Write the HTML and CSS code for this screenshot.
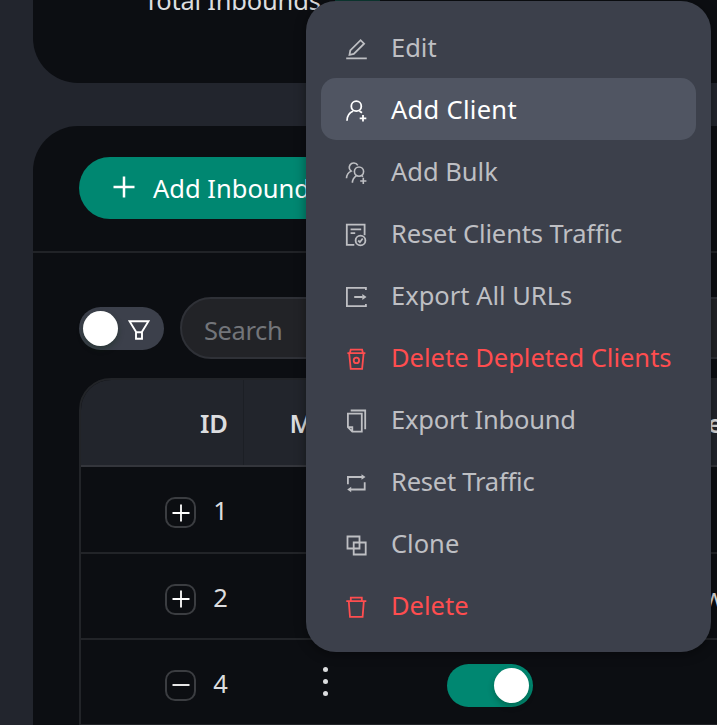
FILE: index.html
```html
<!DOCTYPE html>
<html lang="en">
<head>
<meta charset="utf-8">
<title>Inbounds</title>
<link rel="stylesheet" href="styles.css">
</head>
<body>
<main class="page">
  <section class="card summary">
    <span class="summary-label">Total Inbounds</span>
    <span class="tag"></span>
  </section>

  <section class="card inbounds">
    <header class="card-head">
      <button class="btn-add">
        <svg width="22" height="22" viewBox="0 0 22 22"><path d="M11 0.5v21M0.5 11h21" stroke-width="2.5"/></svg>
        <span>Add Inbound</span>
      </button>
    </header>
    <div class="filters">
      <div class="switch filter-switch">
        <span class="knob"></span>
        <svg width="22" height="22" viewBox="0 0 22 22"><path d="M1.500 2.200h19L14 12.800v7H8v-7zM8 13.200h6" stroke-width="1.900"/></svg>
      </div>
      <div class="search">Search</div>
    </div>
    <div class="table">
      <div class="row head">
        <div class="cell id">ID</div>
        <div class="cell center">Menu</div>
        <div class="cell"></div>
        <div class="cell remark">Remark</div>
      </div>
      <div class="row">
        <div class="cell id"><span class="expand"><svg width="18" height="18" viewBox="0 0 18 18"><path d="M.5 9h17M9 .5v17"/></svg></span><span class="num">1</span></div>
      </div>
      <div class="row">
        <div class="cell id"><span class="expand"><svg width="18" height="18" viewBox="0 0 18 18"><path d="M.5 9h17M9 .5v17"/></svg></span><span class="num">2</span></div>
        <div class="cell"></div>
        <div class="cell"></div>
        <div class="cell protocol">vw</div>
      </div>
      <div class="row">
        <div class="cell id"><span class="expand"><svg width="18" height="18" viewBox="0 0 18 18"><path d="M.5 9h17"/></svg></span><span class="num">4</span></div>
        <div class="cell center"><span class="dots"><i></i><i></i><i></i></span></div>
        <div class="cell center"><div class="switch on"><span class="knob"></span></div></div>
      </div>
    </div>
  </section>

  <ul class="menu">
    <li class="item">
      <svg viewBox="0 0 24 24"><path d="M1.200 21.400h20.600M4.500 17.800l.8-4.400L15.600 3.200l3.500 3.500L8.800 17z"/></svg><span>Edit</span></li>
    <li class="item active wide">
      <svg viewBox="0 0 24 24"><circle cx="11.300" cy="7.200" r="5"/><path d="M2 21.800c0-5 2.400-8.200 6.200-9.800M14.400 12l2.600 1.800M18 16v6.600M14.700 19.300h6.600"/></svg><span>Add Client</span></li>
    <li class="item">
      <svg viewBox="0 0 24 24" class="thin"><circle cx="14" cy="10.600" r="4.600"/><path d="M7.400 21.800c0-3.400 1.200-5.200 4-7.200M16.700 14.600l1.400 1M12.800 4.400C11.200 1.400 6.700 1 5 4c-1.300 2.200-.5 4.600 1.200 6.100C3.200 11.500 1.700 13.700 1.500 17.200M18.300 16.800v6.200M15.200 20h6.200"/></svg><span>Add Bulk</span></li>
    <li class="item tight">
      <svg viewBox="0 0 24 24"><path d="M9.300 21.800H1.800V1.700h17.800v10.500M5.600 6.300h10.600M5.600 10.100h4.600"/><circle cx="15.500" cy="17.500" r="4.900"/><path d="M13.200 17.500l1.700 1.700 2.800-3.700"/></svg><span>Reset Clients Traffic</span></li>
    <li class="item">
      <svg viewBox="0 0 24 24"><path d="M20.900 5V2.900H1.900v18.300h19V19M9.200 12h8.500"/><path d="M17.300 9l4.200 3-4.200 3z" class="solid"/></svg><span>Export All URLs</span></li>
    <li class="item danger">
      <svg viewBox="0 0 24 24"><path d="M2.400 6.200h18M4.900 6l.8-3.400h11.400l.8 3.400M4.200 6.500l1.500 15.300h11.400l1.500-15.300"/><circle cx="11.400" cy="13.400" r="2.700"/></svg><span>Delete Depleted Clients</span></li>
    <li class="item tighter">
      <svg viewBox="0 0 24 24"><path d="M5.700 1.500h14.500v18.800M2.900 4.600h13.900v18H7.300l-4.400-4.400zM2.900 18.200h4.400v4.400"/></svg><span>Export Inbound</span></li>
    <li class="item tighter">
      <svg viewBox="0 0 24 24"><path d="M2.900 13.200V6h14.500M19.700 11.200v7.300H5.200"/><path d="M16.500 3.200l4 2.800-4 2.800zM6.200 15.700l-4 2.800 4 2.800z" class="solid"/></svg><span>Reset Traffic</span></li>
    <li class="item">
      <svg viewBox="0 0 24 24"><path d="M2.500 3.500h12v12h-12zM8.700 9.500h12v12h-12z"/></svg><span>Clone</span></li>
    <li class="item danger">
      <svg viewBox="0 0 24 24"><path d="M1.300 6.200h20M5.800 6V2.700h11V6M3.800 6.500l1.200 15.300h12.600l1.200-15.300"/></svg><span>Delete</span></li>
  </ul>
</main>
</body>
</html>
```
FILE: styles.css
```css
* { box-sizing: border-box; }
body {
  margin: 0;
  height: 725px;
  overflow: hidden;
  background: #22252d;
  color: #dcdddf;
  font: 25.5px/36px "Noto Sans", "Open Sans", sans-serif;
}
svg { fill: none; stroke: currentColor; stroke-width: 1.8; flex: none; }
.page { position: relative; width: 717px; height: 725px; overflow: hidden; }
.card { width: 900px; margin-left: 33px; background: #0c0e12; }
.summary {
  display: flex;
  align-items: flex-end;
  height: 83px;
  border-radius: 0 0 45px 45px;
  padding: 0 0 65px 111px;
  gap: 16px;
}
.summary-label { width: 175px; letter-spacing: -.2px; white-space: nowrap; }
.tag { width: 45px; height: 44px; border-radius: 8px; background: #0d3b34; }
.inbounds { margin-top: 43px; height: 640px; border-radius: 45px 45px 0 0; }
.card-head { height: 127px; padding: 31px 46px; border-bottom: 2px solid #212327; }
.btn-add {
  display: flex;
  align-items: center;
  gap: 19px;
  width: 270px;
  height: 62px;
  padding: 0 33px 0 34px;
  border: 0;
  border-radius: 31px;
  background: #008771;
  color: #fff;
  font: inherit;
  letter-spacing: 0;
  white-space: nowrap;
}
.btn-add svg { margin-top: -3px; }
.btn-add span { margin-left: -1px; }
.filters { display: flex; align-items: center; gap: 16px; height: 62px; margin: 44px 46px 0; }
.switch { display: flex; align-items: center; width: 85px; height: 43px; padding: 4px; border-radius: 22px; background: #3c404b; }
.switch .knob { width: 35px; height: 35px; border-radius: 50%; background: #fff; box-shadow: 0 3px 6px rgba(0, 35, 11, .3); }
.filter-switch svg { margin: 3px 0 0 10px; color: #fff; }
.switch.on { width: 86px; justify-content: flex-end; background: #008771; }
.search {
  width: 700px;
  height: 62px;
  padding: 13px 22px;
  border: 2px solid #2f3137;
  border-radius: 31px;
  background: #222327;
  color: #73757a;
  line-height: 37px;
  letter-spacing: -.4px;
}
.table { margin: 19px 46px 0; height: 380px; border: 2px solid #222428; border-radius: 32px 32px 0 0; overflow: hidden; }
.row { display: grid; grid-template-columns: 163px 162px 168px 1fr; height: 86px; border-bottom: 2px solid #222428; }
.row:nth-child(2) { height: 87px; }
.head { height: 87px; background: #22252c; border-color: #34363c; font-weight: 600; }
.cell { display: flex; align-items: center; padding-top: 1px; }
.head .id { border-right: 1px solid #1c1f25; padding-right: 15px; }
.id { justify-content: flex-end; gap: 17px; padding-right: 16px; }
.num { width: 15px; text-align: center; }
.center { justify-content: center; }
.remark { padding-left: 117px; }
.protocol { padding-left: 117px; }
.expand {
  display: flex;
  align-items: center;
  justify-content: center;
  width: 31px;
  height: 31px;
  margin-top: 5px;
  border: 2px solid #3b3d41;
  border-radius: 10px;
  color: #fff;
}
.dots { display: flex; flex-direction: column; gap: 7px; margin-top: -3px; }
.dots i { width: 5px; height: 5px; border-radius: 50%; background: #dcdddf; }
.row .switch { margin-top: 5px; }
.menu {
  position: absolute;
  left: 306px;
  top: 1px;
  width: 405px;
  height: 651px;
  margin: 0;
  padding: 15px;
  list-style: none;
  border-radius: 30px;
  background: #3c404b;
  color: #bebfc3;
  box-shadow: 0 2px 12px rgba(0, 0, 0, .4);
}
.item { display: flex; align-items: center; gap: 22px; height: 62px; padding-left: 24px; border-radius: 15px; white-space: nowrap; }
.item svg { width: 24px; height: 24px; margin-top: 4px; }
.item .thin { stroke-width: 1.6; }
.item .solid { fill: currentColor; stroke: none; }
.item.wide { letter-spacing: .3px; }
.item.tight { letter-spacing: -.12px; }
.item.tighter { letter-spacing: -.22px; }
.item.active { background: #505562; color: #fff; }
.item.danger { color: #ff4d4f; }
```
